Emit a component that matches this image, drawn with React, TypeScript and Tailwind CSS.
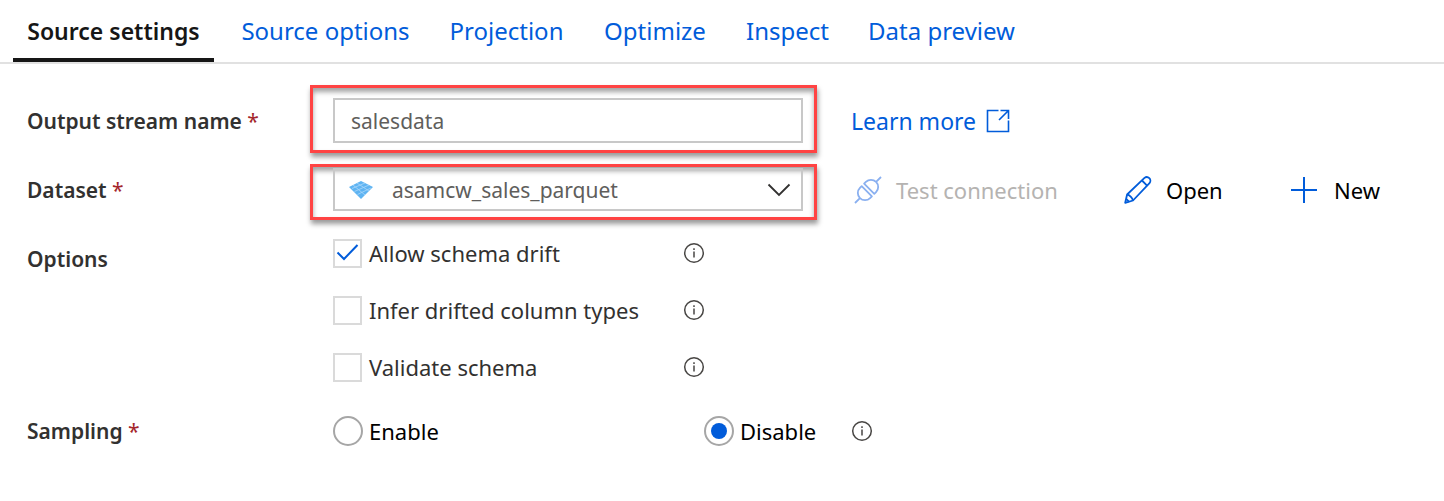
import { useState, type ReactNode } from "react";

const tabs = [
  { name: "Source settings", width: "w-[201px]" },
  { name: "Source options", width: "w-[193px]" },
  { name: "Projection", width: "w-[139px]" },
  { name: "Optimize", width: "w-[128px]" },
  { name: "Inspect", width: "w-[107px]" },
  { name: "Data preview", width: "w-[171px]" },
];

const schemaOptions = [
  { id: "drift", label: "Allow schema drift", checked: true },
  { id: "infer", label: "Infer drifted column types", checked: false },
  { id: "validate", label: "Validate schema", checked: false },
];

function InfoIcon() {
  return (
    <svg width="22" height="22" viewBox="0 0 22 22" fill="none" stroke="#484644" strokeWidth="1.5" aria-hidden="true">
      <circle cx="11" cy="11" r="9.3" />
      <path d="M11 9.5v6M11 6.3v1.6" />
    </svg>
  );
}

function InfoButton({ about }: { about: string }) {
  return (
    <button type="button" aria-label={`About ${about}`} className="shrink-0">
      <InfoIcon />
    </button>
  );
}

function ParquetIcon() {
  return (
    <svg width="24" height="20" viewBox="0 0 24 20" aria-hidden="true">
      <path d="M12 1 24 7 12 19 0 7Z" fill="#5fb4f2" />
      <path d="M8 3 20 11M4 5 16 15M3 8.500 16 3M5.500 11.500 20 5M8.500 14.500 22 8" stroke="#a9d7fa" strokeWidth="0.8" />
    </svg>
  );
}

function ExternalIcon() {
  return (
    <svg width="24" height="24" viewBox="0 0 24 24" fill="none" stroke="#015cda" strokeWidth="1.6" aria-hidden="true">
      <path d="M12.500 1.500H1.500v21h21V11.500M14.500 1.500h8v8.500M22.500 1.500 13 11" />
    </svg>
  );
}

function PlugIcon() {
  return (
    <svg width="28" height="28" viewBox="0 0 28 28" fill="none" stroke="#8ab0f0" strokeWidth="1.8" strokeLinejoin="round" aria-hidden="true">
      <g transform="rotate(-45 14 14)">
        <path d="M12.300 6.800h-2.500a7.200 7.200 0 0 0 0 14.400h2.500z" />
        <path d="M15.700 6.800h2.500a7.200 7.200 0 0 1 0 14.400h-2.500z" />
        <path d="M-4.400 14h7M25.400 14h7" />
      </g>
    </svg>
  );
}

function PencilIcon() {
  return (
    <svg width="28" height="28" viewBox="0 0 28 28" fill="none" stroke="#015cda" strokeWidth="1.8" strokeLinejoin="round" aria-hidden="true">
      <path d="M1.200 26.800l1.900-8.300L20.500 1.900c1.500-1.200 3.500-1 4.800.3s1.500 3.500.2 4.900L9 24.500z" />
      <path d="M18 4.500l5.300 5.300M3.100 18.500c2.200.3 5.400 3.500 5.900 6M2.200 22.800l3 3" />
    </svg>
  );
}

function PlusIcon() {
  return (
    <svg width="26" height="26" viewBox="0 0 26 26" stroke="#015cda" strokeWidth="2" aria-hidden="true">
      <path d="M13 0v26M0 13h26" />
    </svg>
  );
}

function Required() {
  return <span className="font-normal text-[#a4262c]"> *</span>;
}

function FieldLabel({ children, htmlFor }: { children: ReactNode; htmlFor: string }) {
  return (
    <label htmlFor={htmlFor} className="w-[283px] shrink-0 text-[21px] font-semibold">
      {children}
      <Required />
    </label>
  );
}

const highlight =
  "w-[507px] shrink-0 self-start border-3 border-[#ff4343] pl-5 shadow-[1px_4px_5px_rgba(0,0,0,0.4),inset_0px_4px_5px_rgba(0,0,0,0.36)]";

export default function App() {
  const [tab, setTab] = useState(tabs[0].name);
  const [sampling, setSampling] = useState("Disable");

  return (
    <main className="min-h-screen bg-white font-['Noto_Sans',sans-serif] text-[22px] leading-8 text-[#323130]">
      <nav className="flex gap-[15px] border-b-2 border-[#e1e1e1] pl-[13px]">
        {tabs.map(({ name, width }) => (
          <button
            key={name}
            type="button"
            onClick={() => setTab(name)}
            className={`${width} shrink-0 border-b-4 pt-[15px] pb-[11px] text-center whitespace-nowrap ${
              tab === name
                ? "border-[#161616] text-[23px] font-semibold text-[#161616]"
                : "border-transparent text-[24px] text-[#015cda]"
            }`}
          >
            {name}
          </button>
        ))}
      </nav>

      <form className="pt-[21px] pl-[27px]">
        <div className="flex min-h-[72px] items-center">
          <FieldLabel htmlFor="stream">Output stream name</FieldLabel>
          <div className={`${highlight} pt-[10px] pb-[7px]`}>
            <input
              id="stream"
              defaultValue="salesdata"
              className="block h-[45px] w-[470px] border-2 border-[#c8c8c8] px-4 text-[21px] text-[#605e5c] outline-none"
            />
          </div>
          <a href="#learn" className="ml-[34px] flex items-center gap-[10px] text-[23px] text-[#015cda]">
            Learn more
            <ExternalIcon />
          </a>
        </div>

        <div className="mt-[7px] flex items-center">
          <FieldLabel htmlFor="dataset">Dataset</FieldLabel>
          <div className={`${highlight} -mb-1 pt-px pb-[6px]`}>
            <div className="relative w-[470px]">
              <select
                id="dataset"
                className="block h-[43px] w-full appearance-none border-2 border-[#c8c8c8] bg-transparent pl-[57px] text-[21px] text-[#605e5c] outline-none"
              >
                <option>asamcw_sales_parquet</option>
              </select>
              <span className="pointer-events-none absolute inset-0 flex items-center justify-between pr-3 pl-4">
                <ParquetIcon />
                <svg width="24" height="14" viewBox="0 0 24 14" fill="none" stroke="#323130" strokeWidth="1.8" aria-hidden="true">
                  <path d="M1.500 1.500 12 12 22.500 1.500" />
                </svg>
              </span>
            </div>
          </div>
          <button type="button" disabled className="ml-[37px] flex w-[270px] items-center gap-[14px] text-[#b5b3b1]">
            <PlugIcon />
            Test connection
          </button>
          <button type="button" className="flex w-[167px] items-center gap-[14px] text-black">
            <PencilIcon />
            Open
          </button>
          <button type="button" className="flex items-center gap-[17px] text-black">
            <PlusIcon />
            New
          </button>
        </div>

        <div role="group" aria-labelledby="options-label" className="mt-[21px] flex items-start">
          <span id="options-label" className="w-[306px] shrink-0 pt-[6px] text-[21px] font-semibold">Options</span>
          <div className="flex w-[372px] flex-col gap-[25px]">
            {schemaOptions.map(({ id, label, checked }) => (
              <div key={id} className="flex items-center justify-between">
                <label htmlFor={id} className="flex items-center gap-[7px]">
                  <span className="grid">
                    <input
                      id={id}
                      type="checkbox"
                      defaultChecked={checked}
                      className="peer col-start-1 row-start-1 size-[29px] appearance-none border-2 border-[#dadada] bg-white"
                    />
                    <svg width="29" height="29" viewBox="0 0 29 29" fill="none" stroke="#015cda" strokeWidth="2" className="pointer-events-none invisible col-start-1 row-start-1 peer-checked:visible" aria-hidden="true">
                      <path d="M4.500 13.500 11 20 24.500 6" />
                    </svg>
                  </span>
                  {label}
                </label>
                <InfoButton about={label} />
              </div>
            ))}
          </div>
        </div>

        <div role="radiogroup" aria-labelledby="sampling-label" className="mt-8 flex items-center text-black">
          <span id="sampling-label" className="w-[306px] shrink-0 text-[21px] font-semibold text-[#323130]">
            Sampling
            <Required />
          </span>
          {["Enable", "Disable"].map((choice) => (
            <label key={choice} className={`flex items-center gap-[6px] ${choice === "Enable" ? "w-[371px]" : "w-[147px]"}`}>
              <input
                type="radio"
                name="sampling"
                checked={sampling === choice}
                onChange={() => setSampling(choice)}
                className="size-[30px] appearance-none rounded-full border-2 border-[#a6a6a6] bg-white p-[5px] checked:bg-[#015cda] checked:bg-clip-content"
              />
              {choice}
            </label>
          ))}
          <InfoButton about="Sampling" />
        </div>
      </form>
    </main>
  );
}
